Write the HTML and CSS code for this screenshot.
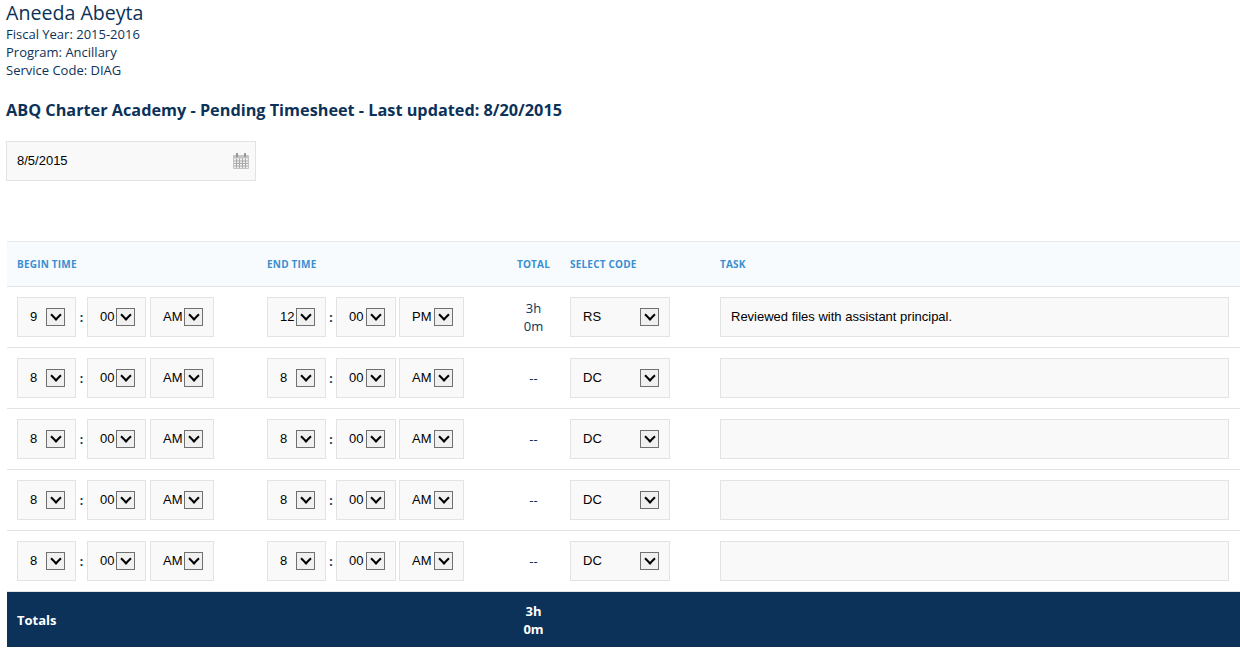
FILE: index.html
```html
<!DOCTYPE html>
<html>
<head>
<link rel="stylesheet" href="styles.css">
</head>
<body>

<div class="person">
  <h1>Aneeda Abeyta</h1>
  <p>Fiscal Year: 2015-2016</p>
  <p>Program: Ancillary</p>
  <p>Service Code: DIAG</p>
</div>

<h2 class="sheet-title">ABQ Charter Academy - Pending Timesheet - Last updated: 8/20/2015</h2>

<div class="datebox">
  <span>8/5/2015</span>
  <svg class="cal" width="18" height="18" viewBox="0 0 18 18">
    <rect x="1" y="3" width="16" height="14" rx="1" fill="#c4c4c4"/>
    <rect x="4" y="1" width="2" height="4" fill="#999"/>
    <rect x="12" y="1" width="2" height="4" fill="#999"/>
    <rect x="2" y="6.500" width="14" height="9.500" fill="#f1f1f1"/>
    <path d="M2 9h14M2 11.500h14M2 14h14M4.500 6.500v9.500M7.500 6.500v9.500M10.500 6.500v9.500M13.500 6.500v9.500" stroke="#aaa" stroke-width="1" fill="none"/>
  </svg>
</div>

<table class="timesheet">
  <thead>
    <tr>
      <th class="col-begin">Begin Time</th>
      <th class="col-end">End Time</th>
      <th class="col-total">Total</th>
      <th class="col-code">Select Code</th>
      <th>Task</th>
    </tr>
  </thead>
  <tbody>
    <tr>
      <td><div class="times">
        <div class="sel hour"><span>9</span><i></i></div><b>:</b>
        <div class="sel min"><span>00</span><i></i></div>
        <div class="sel ampm"><span>AM</span><i></i></div>
      </div></td>
      <td><div class="times end">
        <div class="sel hour"><span>12</span><i></i></div><b>:</b>
        <div class="sel min"><span>00</span><i></i></div>
        <div class="sel ampm"><span>PM</span><i></i></div>
      </div></td>
      <td class="total">3h<br>0m</td>
      <td><div class="sel code"><span>RS</span><i></i></div></td>
      <td><div class="task">Reviewed files with assistant principal.</div></td>
    </tr>
    <tr>
      <td><div class="times">
        <div class="sel hour"><span>8</span><i></i></div><b>:</b>
        <div class="sel min"><span>00</span><i></i></div>
        <div class="sel ampm"><span>AM</span><i></i></div>
      </div></td>
      <td><div class="times end">
        <div class="sel hour"><span>8</span><i></i></div><b>:</b>
        <div class="sel min"><span>00</span><i></i></div>
        <div class="sel ampm"><span>AM</span><i></i></div>
      </div></td>
      <td class="total">--</td>
      <td><div class="sel code"><span>DC</span><i></i></div></td>
      <td><div class="task"></div></td>
    </tr>
    <tr>
      <td><div class="times">
        <div class="sel hour"><span>8</span><i></i></div><b>:</b>
        <div class="sel min"><span>00</span><i></i></div>
        <div class="sel ampm"><span>AM</span><i></i></div>
      </div></td>
      <td><div class="times end">
        <div class="sel hour"><span>8</span><i></i></div><b>:</b>
        <div class="sel min"><span>00</span><i></i></div>
        <div class="sel ampm"><span>AM</span><i></i></div>
      </div></td>
      <td class="total">--</td>
      <td><div class="sel code"><span>DC</span><i></i></div></td>
      <td><div class="task"></div></td>
    </tr>
    <tr>
      <td><div class="times">
        <div class="sel hour"><span>8</span><i></i></div><b>:</b>
        <div class="sel min"><span>00</span><i></i></div>
        <div class="sel ampm"><span>AM</span><i></i></div>
      </div></td>
      <td><div class="times end">
        <div class="sel hour"><span>8</span><i></i></div><b>:</b>
        <div class="sel min"><span>00</span><i></i></div>
        <div class="sel ampm"><span>AM</span><i></i></div>
      </div></td>
      <td class="total">--</td>
      <td><div class="sel code"><span>DC</span><i></i></div></td>
      <td><div class="task"></div></td>
    </tr>
    <tr>
      <td><div class="times">
        <div class="sel hour"><span>8</span><i></i></div><b>:</b>
        <div class="sel min"><span>00</span><i></i></div>
        <div class="sel ampm"><span>AM</span><i></i></div>
      </div></td>
      <td><div class="times end">
        <div class="sel hour"><span>8</span><i></i></div><b>:</b>
        <div class="sel min"><span>00</span><i></i></div>
        <div class="sel ampm"><span>AM</span><i></i></div>
      </div></td>
      <td class="total">--</td>
      <td><div class="sel code"><span>DC</span><i></i></div></td>
      <td><div class="task"></div></td>
    </tr>
  </tbody>
  <tfoot>
    <tr>
      <td colspan="2">Totals</td>
      <td class="total">3h<br>0m</td>
      <td colspan="2"></td>
    </tr>
  </tfoot>
</table>

</body>
</html>
```

FILE: styles.css
```css
html, body
{
  margin: 0;
  padding: 0;
  background: #fff;
  overflow: hidden;
}

body
{
  font-family: "Open Sans", sans-serif;
  font-size: 13px;
  color: #0c3259;
  padding: 0 0 0 6px;
}

/* header */
.person h1
{
  margin: 0;
  padding-top: 1px;
  font-size: 19.600px;
  line-height: 24px;
  font-weight: 400;
}

.person p
{
  margin: 0;
  line-height: 18px;
}

.sheet-title
{
  margin: 19px 0 0;
  font-size: 16.250px;
  line-height: 24px;
  font-weight: 700;
}

.datebox
{
  display: flex;
  align-items: center;
  justify-content: space-between;
  box-sizing: border-box;
  width: 250px;
  height: 40px;
  margin-top: 19px;
  padding: 0 5px 0 10px;
  background: #f9f9f9;
  border: 1px solid #e3e3e3;
  font-family: "Liberation Sans", sans-serif;
  font-size: 13px;
  color: #000;
}

.datebox span
{
  margin-bottom: 2px;
}

/* table */
.timesheet
{
  margin: 60px 0 0 1px;
  width: 1233px;
  table-layout: fixed;
  border-collapse: collapse;
  font-size: 13px;
  color: #0c3259;
}

.timesheet th
{
  height: 44px;
  padding: 0 0 0 10px;
  text-align: left;
  background: #f7fbfe;
  border-top: 1px solid #e8e8e8;
  border-bottom: 1px solid #e3e3e3;
  font-size: 10px;
  font-weight: 700;
  letter-spacing: 0.2px;
  text-transform: uppercase;
  color: #3a8fd0;
}

.timesheet th.col-begin,
.timesheet th.col-end
{
  width: 240px;
}

.timesheet th.col-total
{
  width: 53px;
  padding: 0;
  text-align: center;
}

.timesheet th.col-code
{
  width: 140px;
}

.timesheet tbody td
{
  height: 40px;
  padding: 10px 0 10px 10px;
  border-bottom: 1px solid #e3e3e3;
}

.timesheet td.total
{
  padding: 0;
  text-align: center;
  line-height: 18px;
}

.times
{
  display: flex;
  align-items: center;
}

.times b
{
  width: 11px;
  text-align: center;
  font-weight: 700;
  font-size: 12px;
}

.times.end b
{
  width: 10px;
}

.sel
{
  display: flex;
  align-items: center;
  justify-content: space-between;
  box-sizing: border-box;
  height: 40px;
  background: #f9f9f9;
  border: 1px solid #e3e3e3;
  font-family: "Liberation Sans", sans-serif;
  font-size: 13px;
  color: #000;
}

.sel span
{
  margin-bottom: 2px;
}

.sel i
{
  position: relative;
  box-sizing: border-box;
  width: 19px;
  height: 18px;
  background: #f0f0f0;
  border: 1px solid #707070;
}

.sel i::after
{
  content: "";
  position: absolute;
  box-sizing: border-box;
  left: 4.500px;
  top: 2px;
  width: 8px;
  height: 8px;
  border-right: 2px solid #000;
  border-bottom: 2px solid #000;
  transform: rotate(45deg);
}

.hour
{
  width: 59px;
  padding: 0 10px 0 12px;
}

.min
{
  width: 59px;
  margin-right: 4px;
  padding: 0 10px 0 12px;
}

.end .min
{
  width: 60px;
  margin-right: 3px;
}

.ampm
{
  width: 64px;
  padding: 0 10px 0 12px;
}

.end .ampm
{
  width: 65px;
}

.code
{
  width: 100px;
  padding: 0 10px 0 12px;
}

.task
{
  box-sizing: border-box;
  width: 509px;
  height: 40px;
  padding: 0 10px;
  line-height: 37px;
  background: #f9f9f9;
  border: 1px solid #e3e3e3;
  font-family: "Liberation Sans", sans-serif;
  font-size: 13px;
  color: #000;
}

/* totals */
.timesheet tfoot td
{
  height: 55px;
  padding: 0 0 0 10px;
  background: #0c3259;
  color: #fff;
  font-weight: 700;
  font-size: 13px;
}

.timesheet tfoot td.total
{
  padding: 0;
}
```
